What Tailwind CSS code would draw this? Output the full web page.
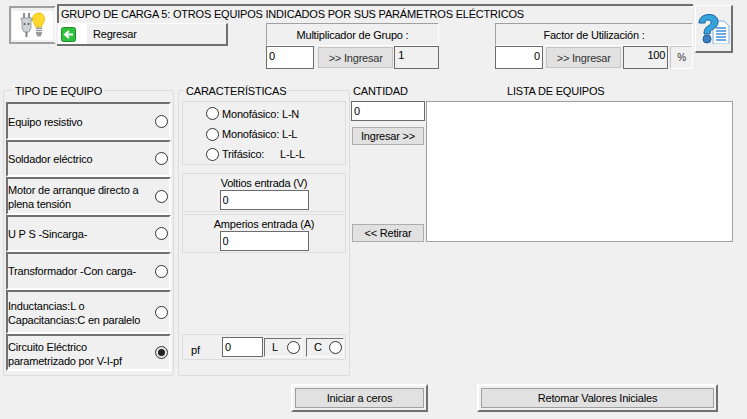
<!DOCTYPE html>
<html lang="en">
<head>
    <meta charset="UTF-8">
    <title>Grupo de carga 5</title>
    <script src="https://cdn.jsdelivr.net/npm/@tailwindcss/browser@4"></script>
</head>
<body class="bg-[#f0f0f0] overflow-hidden">
<div class="w-[747px] h-[419px] bg-[#f0f0f0] text-black text-[11px] tracking-[-0.2px] leading-[14px] font-['Liberation_Sans',sans-serif] overflow-hidden">

    <!-- top bar -->
    <div class="flex pt-[4px] pl-[9px] h-[83px]">
        <div class="mt-[2px] w-[47px] h-[38px] border-2 border-t-[#a0a0a0] border-l-[#a0a0a0] border-r-[#f8f8f8] border-b-[#a0a0a0] flex items-center justify-center">
            <div class="w-[41px] h-[29px] bg-white flex items-center justify-center">
                <svg width="26" height="26" viewBox="0 0 26 26">
                    <path d="M19 1c-4 0-6.500 2.500-6.500 6 0 3 2.500 5 3 8h6c.5-3 3-5 3-8 0-3.500-2.500-6-5.500-6z" fill="#ffd92e" stroke="#e6b800" stroke-width=".8"/>
                    <path d="M16 15.500h6v6l-1.500 3h-3l-1.500-3z" fill="#9a9a9a"/>
                    <path d="M16 17.500h6M16 19.500h6" stroke="#e8e8e8"/>
                    <path d="M4 1v6M9 1v6" stroke="#8a8f96" stroke-width="2"/>
                    <path d="M1 6h11v2h-1v8l-2 4H4l-2-4V8H1z" fill="#cfd2d6" stroke="#7d8187" stroke-width=".7"/>
                    <path d="M6.500 20v5" stroke="#7d8187" stroke-width="2"/>
                    <circle cx="4.500" cy="12" r="1" fill="#555"/>
                    <circle cx="8.500" cy="12" r="1" fill="#555"/>
                </svg>
            </div>
        </div>
        <div class="ml-[1px] w-[636px]">
            <div class="h-[19px] border-t-2 border-l-2 border-[#707070] pl-[2px] pb-[2px] flex items-center whitespace-nowrap">GRUPO DE CARGA 5: OTROS EQUIPOS INDICADOS POR SUS PARÁMETROS ELÉCTRICOS</div>
            <div class="flex">
                <div class="w-[171px] h-[23px] border-r-2 border-b-2 border-[#707070] border-t border-t-white flex items-center">
                    <span class="ml-[1px] w-[29px] h-[20px] bg-white flex items-center pl-[3px]">
                        <svg width="15" height="15" viewBox="0 0 15 15">
                            <rect x=".5" y=".5" width="14" height="14" rx="2" fill="#2fc23c" stroke="#1c8a28"/>
                            <path d="M12 7.500H5M8 4L4 7.500 8 11" fill="none" stroke="#fff" stroke-width="2"/>
                        </svg>
                    </span>
                    <span class="ml-[6px]">Regresar</span>
                </div>
                <div class="ml-[38px] w-[173px]">
                    <div class="h-[23px] border-t border-l border-t-[#a0a0a0] border-l-[#a0a0a0] border-r border-r-white border-b border-b-white flex items-center justify-center">Multiplicador de Grupo :</div>
                    <div class="flex h-[23px]">
                        <input readonly value="0" class="w-[48px] h-[23px] bg-white border border-[#6b6b6b] px-[2px] pb-[4px]">
                        <div class="ml-[4px] w-[76px] h-[21px] mt-[1px] bg-[#e1e1e1] border border-[#c4c4c4] flex items-center justify-center text-[#333]">&gt;&gt; Ingresar</div>
                        <div class="w-[45px] ml-[1px] h-[23px] bg-[#f0f0f0] border border-[#6b6b6b] pl-[3px] pt-[1px]">1</div>
                    </div>
                </div>
                <div class="ml-[56px] w-[198px]">
                    <div class="h-[23px] border-t border-l border-t-[#a0a0a0] border-l-[#a0a0a0] border-r border-r-white border-b border-b-white flex items-center justify-center">Factor de Utilización :</div>
                    <div class="flex h-[23px]">
                        <input readonly value="0" class="w-[48px] h-[23px] bg-white border border-[#6b6b6b] px-[2px] pb-[4px] text-right">
                        <div class="ml-[3px] w-[76px] h-[21px] mt-[1px] bg-[#e1e1e1] border border-[#c4c4c4] flex items-center justify-center text-[#333]">&gt;&gt; Ingresar</div>
                        <div class="ml-[2px] w-[45px] h-[23px] border border-[#6b6b6b] text-right pr-[2px] pt-[1px]">100</div>
                        <div class="ml-[2px] w-[23px] h-[23px] border-t border-l border-t-[#c8c8c8] border-l-[#c8c8c8] border-r border-r-white border-b border-b-white flex items-center justify-center text-[10px] text-[#333]">%</div>
                    </div>
                </div>
            </div>
        </div>
        <div class="ml-[2px] mt-[1px] w-[38px] h-[48px] border-t border-l border-white border-r-2 border-b-2 border-r-[#707070] border-b-[#707070] flex items-center justify-center">
            <svg width="32" height="30" viewBox="0 0 32 30">
                <path d="M15 7h11l5 5v18H15z" fill="#fff" stroke="#7fb0e0"/>
                <path d="M18 14h10M18 17h10M18 20h10M18 23h10M18 26h10" stroke="#3f8fd8" stroke-width="1.500"/>
                <path d="M1 9C1 3 6 .5 11 .5c6 0 9 3 9 7.500 0 4-3 6-5 7-2 1-3 2-3 5H6c0-4 1-6 4-8 2-1 3-2 3-4 0-1-1-2-3-2s-3 1-3 3z" fill="#35a4dc" stroke="#1c5f9c"/>
                <circle cx="9" cy="25" r="4" fill="#3b7fc4" stroke="#1c5f9c"/>
            </svg>
        </div>
    </div>

    <!-- main area -->
    <div class="flex pl-[3px]">
        <fieldset class="w-[171px] h-[293px] border border-[#dcdcdc] rounded-[2px] pl-[2px] pr-[2px]">
            <legend class="ml-[7px] px-[2px] h-[14px] pt-[1px]">TIPO DE EQUIPO</legend>
            <div class="mt-[5px]">
                <div class="h-[38px] border-t-2 border-l-2 border-t-[#707070] border-l-[#707070] border-r-2 border-b-2 border-r-white border-b-white flex items-center justify-between pr-[1px]">
                    <span class="pt-[1px]">Equipo resistivo</span>
                    <span class="w-[13px] h-[13px] rounded-full bg-white border border-[#333]"></span>
                </div>
                <div class="h-[37px] border-t-2 border-l-2 border-t-[#707070] border-l-[#707070] border-r-2 border-b-2 border-r-white border-b-white flex items-center justify-between pr-[1px]">
                    <span>Soldador eléctrico</span>
                    <span class="w-[13px] h-[13px] rounded-full bg-white border border-[#333]"></span>
                </div>
                <div class="h-[38px] border-t-2 border-l-2 border-t-[#707070] border-l-[#707070] border-r-2 border-b-2 border-r-white border-b-white flex items-center justify-between pr-[1px]">
                    <span class="w-[140px] pt-[1px]">Motor de arranque directo a plena tensión</span>
                    <span class="w-[13px] h-[13px] rounded-full bg-white border border-[#333]"></span>
                </div>
                <div class="h-[37px] border-t-2 border-l-2 border-t-[#707070] border-l-[#707070] border-r-2 border-b-2 border-r-white border-b-white flex items-center justify-between pr-[1px]">
                    <span>U P S -Sincarga-</span>
                    <span class="w-[13px] h-[13px] rounded-full bg-white border border-[#333]"></span>
                </div>
                <div class="h-[38px] border-t-2 border-l-2 border-t-[#707070] border-l-[#707070] border-r-2 border-b-2 border-r-white border-b-white flex items-center justify-between pr-[1px]">
                    <span>Transformador -Con carga-</span>
                    <span class="w-[13px] h-[13px] rounded-full bg-white border border-[#333]"></span>
                </div>
                <div class="h-[44px] border-t-2 border-l-2 border-t-[#707070] border-l-[#707070] border-r-2 border-b-2 border-r-white border-b-white flex items-center justify-between pr-[1px]">
                    <span class="w-[140px] pt-[1px]">Inductancias:L o Capacitancias:C en paralelo</span>
                    <span class="w-[13px] h-[13px] rounded-full bg-white border border-[#333]"></span>
                </div>
                <div class="h-[37px] border-t-2 border-l-2 border-t-[#707070] border-l-[#707070] border-r-2 border-b-2 border-r-white border-b-white flex items-center justify-between pr-[1px]">
                    <span class="w-[140px] pt-[2px]">Circuito Eléctrico parametrizado por V-I-pf</span>
                    <span class="w-[13px] h-[13px] rounded-full bg-[#e6e6e6] border border-[#333] flex items-center justify-center"><span class="w-[7px] h-[7px] rounded-full bg-[#222]"></span></span>
                </div>
            </div>
        </fieldset>

        <fieldset class="ml-[4px] w-[172px] h-[293px] border border-[#dcdcdc] rounded-[2px] pl-[3px] pr-[3px]">
            <legend class="ml-[2px] px-[2px] h-[14px] pt-[1px]">CARACTERÍSTICAS</legend>
            <div class="mt-[4px] h-[64px] border border-[#dcdcdc] pt-[1px] pl-[23px]">
                <div class="flex items-center h-[21px]"><span class="w-[13px] h-[13px] rounded-full bg-white border border-[#333]"></span><span class="ml-[3px]">Monofásico: L-N</span></div>
                <div class="flex items-center h-[20px]"><span class="w-[13px] h-[13px] rounded-full bg-white border border-[#333]"></span><span class="ml-[3px]">Monofásico: L-L</span></div>
                <div class="flex items-center h-[20px]"><span class="w-[13px] h-[13px] rounded-full bg-white border border-[#333]"></span><span class="ml-[3px] w-[58px]">Trifásico:</span><span>L-L-L</span></div>
            </div>
            <div class="mt-[8px] h-[39px] border border-[#dcdcdc] flex flex-col items-center pt-[2px]">
                <span>Voltios entrada (V)</span>
                <input readonly value="0" class="w-[89px] h-[20px] bg-white border border-[#6b6b6b] px-[2px]">
            </div>
            <div class="mt-[2px] h-[39px] border border-[#dcdcdc] flex flex-col items-center pt-[2px]">
                <span>Amperios entrada (A)</span>
                <input readonly value="0" class="w-[89px] h-[20px] bg-white border border-[#6b6b6b] px-[2px]">
            </div>
            <div class="mt-[81px] h-[26px] w-[164px] border border-[#dcdcdc] flex items-center">
                <span class="ml-[8px] w-[31px] mt-[5px]">pf</span>
                <input readonly value="0" class="w-[41px] h-[20px] bg-white border border-[#6b6b6b] px-[2px]">
                <div class="ml-[1px] w-[38px] h-[19px] border-t border-l border-t-[#707070] border-l-[#707070] border-r border-b border-r-white border-b-white flex items-center justify-between pl-[7px] pr-[1px]">
                    <span>L</span><span class="w-[13px] h-[13px] rounded-full bg-white border border-[#333]"></span>
                </div>
                <div class="ml-[4px] w-[38px] h-[19px] border-t border-l border-t-[#707070] border-l-[#707070] border-r border-b border-r-white border-b-white flex items-center justify-between pl-[7px] pr-[1px]">
                    <span>C</span><span class="w-[13px] h-[13px] rounded-full bg-white border border-[#333]"></span>
                </div>
            </div>
        </fieldset>

        <div class="ml-[1px] w-[75px]">
            <div class="h-[14px] pl-[2px] pt-[1px]">CANTIDAD</div>
            <input readonly value="0" class="mt-[4px] w-[74px] h-[20px] bg-white border border-[#6b6b6b] px-[2px]">
            <div class="mt-[6px] ml-[1px] w-[72px] h-[18px] bg-[#e1e1e1] border border-[#adadad] flex items-center justify-center">Ingresar &gt;&gt;</div>
            <div class="mt-[79px] ml-[1px] w-[72px] h-[18px] bg-[#e1e1e1] border border-[#adadad] flex items-center justify-center">&lt;&lt; Retirar</div>
        </div>

        <div class="w-[307px]">
            <div class="h-[14px] pl-[81px] pt-[1px]">LISTA DE EQUIPOS</div>
            <div class="mt-[4px] h-[141px] bg-white border border-[#a0a0a0]"></div>
        </div>
    </div>

    <!-- bottom buttons -->
    <div class="flex mt-[8px] pl-[291px]">
        <div class="w-[137px] h-[28px] border-2 border-t-white border-l-white border-r-[#707070] border-b-[#707070] p-[2px]">
            <div class="h-full bg-[#e1e1e1] border border-[#a0a0a0] flex items-center justify-center">Iniciar a ceros</div>
        </div>
        <div class="ml-[49px] w-[241px] h-[28px] border-2 border-t-white border-l-white border-r-[#707070] border-b-[#707070] p-[2px]">
            <div class="h-full bg-[#e1e1e1] border border-[#a0a0a0] flex items-center justify-center">Retomar Valores Iniciales</div>
        </div>
    </div>
</div>
</body>
</html>
